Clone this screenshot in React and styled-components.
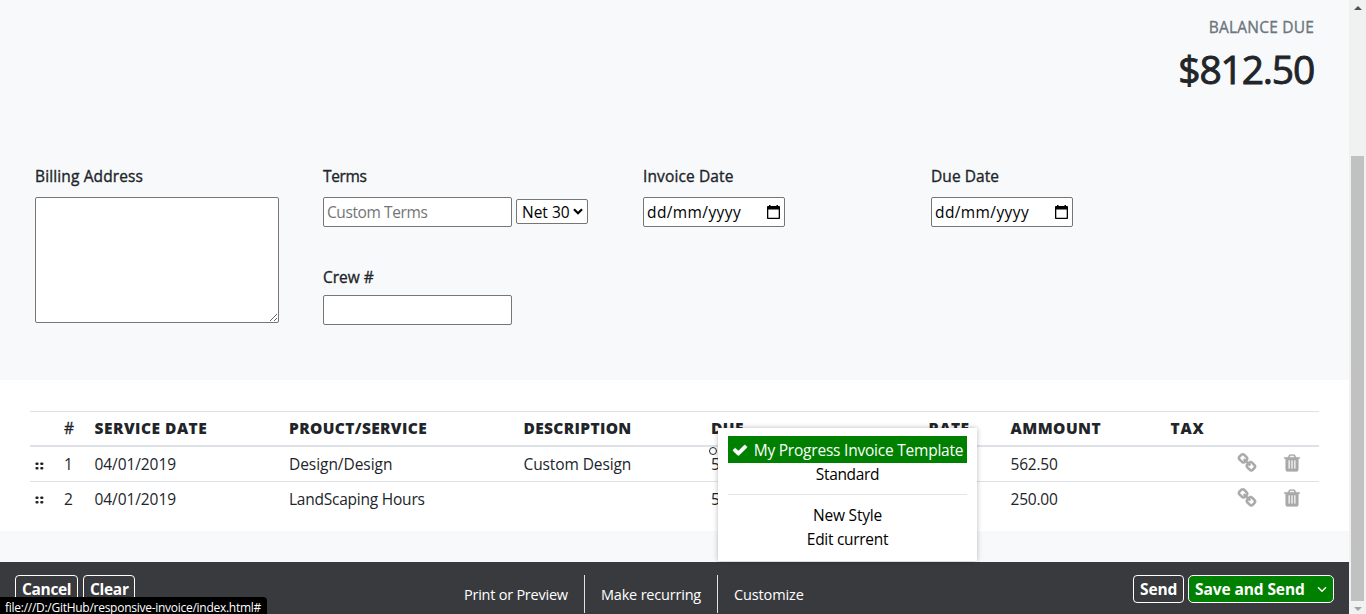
import React from "react";
import styled, { createGlobalStyle } from "styled-components";

const GlobalStyle = createGlobalStyle`
  * { box-sizing: border-box; }
  body {
    margin: 0;
    overflow: hidden;
    background: #f8f9fb;
    color: #212529;
    font: 400 15.5px/24px "Open Sans", "Noto Sans", sans-serif;
  }
`;

const Screen = styled.div`
  position: relative;
  display: flex;
  height: 614px;
  overflow: hidden;
`;

const Page = styled.main`
  flex: 1;
  display: flex;
  flex-direction: column;
  background: #f8f9fb;
`;

const Text = styled.span`
  white-space: nowrap;
  letter-spacing: ${(p) => p.$track || 0}px;
`;

const Balance = styled.header`
  height: 164px;
  padding: 15px 35px 0 0;
  display: flex;
  flex-direction: column;
  align-items: flex-end;
`;

const BalanceLabel = styled(Text)`
  color: #6c757d;
  -webkit-text-stroke: 0.35px #6c757d;
`;

const BalanceAmount = styled(Text)`
  font-size: 39px;
  line-height: 48px;
  -webkit-text-stroke: 0.9px #212529;
  margin: 6px 0 0 0;
`;

const Form = styled.form`
  height: 216px;
  padding-left: 35px;
  display: grid;
  grid-template-columns: 288px 320px 288px 1fr;
  align-items: start;
`;

const Field = styled.div`
  display: flex;
  flex-direction: column;
  align-items: flex-start;
  gap: ${(p) => p.$gap || 9}px;
`;

const FieldStack = styled.div`
  display: flex;
  flex-direction: column;
  gap: 38px;
`;

const Label = styled.label`
  -webkit-text-stroke: 0.35px #212529;
  white-space: nowrap;
  letter-spacing: ${(p) => p.$track || 0}px;
`;

const Controls = styled.div`
  display: flex;
  gap: 4px;
`;

const Input = styled.input`
  width: 189px;
  height: 30px;
  padding: 1px 3px;
  border: 1px solid #767676;
  border-radius: 2px;
  background: #fff;
  font: inherit;
  letter-spacing: -0.4px;
  &::placeholder { color: #757575; opacity: 1; }
`;

const Area = styled.textarea`
  display: block;
  width: 244px;
  height: 126px;
  border: 1px solid #767676;
  border-radius: 2px;
  background: #fff;
  resize: both;
`;

const Select = styled.div`
  width: 72px;
  height: 25px;
  margin-top: 2px;
  padding: 0 4px 0 5px;
  display: flex;
  align-items: center;
  justify-content: space-between;
  border: 1px solid #767676;
  border-radius: 2px;
  background: #fff;
  color: #000;
`;

const DateBox = styled.div`
  width: 142px;
  height: 30px;
  padding: 0 3px;
  display: flex;
  align-items: center;
  justify-content: space-between;
  border: 1px solid #767676;
  border-radius: 2px;
  background: #fff;
  color: #000;
`;

const Items = styled.section`
  height: 151px;
  padding: 31px 30px 0;
  background: #fff;
`;

const Row = styled.div`
  display: grid;
  grid-template-columns: 34px 30.5px 194.5px 234.5px 187.5px 217.5px 82px 160px 66.5px 44.5px 1fr;
  align-items: center;
  height: ${(p) => (p.$head ? 36 : p.$first ? 34 : 35)}px;
  padding-bottom: ${(p) => (p.$head ? 2 : p.$first ? 0 : 1)}px;
  border-top: ${(p) => (p.$first ? 0 : 1)}px solid #dee2e6;
  border-bottom: ${(p) => (p.$head ? 2 : 0)}px solid #dee2e6;
`;

const Heading = styled(Text)`
  font-size: 15.5px;
  font-weight: 800;
`;

const NumberHeading = styled(Text)`
  -webkit-text-stroke: 0.35px #212529;
`;

const Grip = styled.span`
  padding: 3px 0 0 5px;
  display: flex;
`;

const IconCell = styled.span`
  display: flex;
  padding-bottom: 2px;
  color: #a9a9a9;
`;

const Footer = styled.footer`
  height: 52px;
  margin-top: auto;
  padding: 13px 15px 0 15px;
  display: grid;
  grid-template-columns: 433px 1fr auto;
  align-items: start;
  background: #393a3d;
  color: #fff;
`;

const ButtonGroup = styled.div`
  display: flex;
  gap: ${(p) => p.$gap}px;
`;

const Button = styled.button`
  width: ${(p) => p.$width}px;
  height: 28px;
  padding: 0 6px;
  display: flex;
  align-items: center;
  justify-content: space-between;
  border: 1px solid #fff;
  border-radius: ${(p) => (p.$primary ? 5 : 4)}px;
  background: ${(p) => (p.$primary ? "#008000" : "transparent")};
  color: #fff;
  font: 700 15.5px/24px "Open Sans", "Noto Sans", sans-serif;
`;

const Links = styled.nav`
  display: flex;
`;

const FootLink = styled.a`
  width: ${(p) => p.$width}px;
  height: 38px;
  padding: 8px 0 0 16px;
  border-right: ${(p) => (p.$last ? 0 : 1)}px solid #dee2e6;
  font-size: 14.5px;
`;

const Bullet = styled.span`
  position: absolute;
  left: 709px;
  top: 447px;
  width: 8px;
  height: 8px;
  border: 1px solid #212529;
  border-radius: 50%;
`;

const Menu = styled.div`
  position: absolute;
  left: 718px;
  top: 428px;
  width: 259px;
  height: 133px;
  padding: 8px 10px 0;
  background: #fff;
  color: #000;
  box-shadow: 0 0 5px rgba(0, 0, 0, 0.28);
`;

const MenuItem = styled.div`
  height: ${(p) => (p.$active ? 27 : 24)}px;
  padding-bottom: ${(p) => (p.$active ? 0 : 2)}px;
  display: flex;
  align-items: center;
  justify-content: center;
  gap: 6px;
  background: ${(p) => (p.$active ? "#008000" : "transparent")};
  color: ${(p) => (p.$active ? "#fff" : "#000")};
`;

const Divider = styled.div`
  height: 1px;
  margin: 7px 0 9px;
  background: #e5e5e5;
`;

const StatusTip = styled.div`
  position: absolute;
  left: 0;
  bottom: 0;
  width: 267px;
  height: 17px;
  padding: 1px 0 0 5px;
  border-radius: 0 4px 0 0;
  background: #000;
  color: #fff;
  font-size: 12px;
  line-height: 19px;
`;

const Scrollbar = styled.aside`
  width: 17px;
  padding: 6px 0 3px;
  display: flex;
  flex-direction: column;
  align-items: center;
  background: #f1f1f1;
`;

const Thumb = styled.div`
  width: 13px;
  height: 445px;
  margin: 146px 0 6px;
  background: #c1c1c1;
`;

const Arrow = styled.div`
  width: 0;
  height: 0;
  border: 4px solid transparent;
  border-top-width: ${(p) => (p.$down ? 4 : 0)}px;
  border-bottom-width: ${(p) => (p.$down ? 0 : 4)}px;
  border-top-color: ${(p) => (p.$down ? "#a3a3a3" : "transparent")};
  border-bottom-color: ${(p) => (p.$down ? "transparent" : "#505050")};
`;

const LINK_PATH =
  "M1520 1216q0-40-28-68l-208-208q-28-28-68-28-42 0-72 32 3 3 19 18.5t21.5 21.5 15 19 13 25.5 3.5 27.5q0 40-28 68t-68 28q-15 0-27.5-3.5t-25.5-13-19-15-21.5-21.5-18.5-19q-33 31-33 73 0 40 28 68l206 207q27 27 68 27 40 0 68-26l147-146q28-28 28-67zm-703-705q0-40-28-68l-206-207q-28-28-68-28-39 0-68 27l-147 146q-28 28-28 67 0 40 28 68l208 208q27 27 68 27 42 0 72-31-3-3-19-18.5t-21.5-21.5-15-19-13-25.5-3.5-27.5q0-40 28-68t68-28q15 0 27.5 3.5t25.5 13 19 15 21.5 21.5 18.5 19q33-31 33-73zm895 705q0 120-85 203l-147 146q-83 83-203 83-121 0-204-85l-206-207q-83-83-83-203 0-123 88-209l-88-88q-86 88-208 88-120 0-204-84l-208-208q-84-84-84-204t85-203l147-146q83-83 203-83 121 0 204 85l206 207q83 83 83 203 0 123-88 209l88 88q86-88 208-88 120 0 204 84l208 208q84 84 84 204z";
const TRASH_PATH =
  "M704 1376v-704q0-14-9-23t-23-9h-64q-14 0-23 9t-9 23v704q0 14 9 23t23 9h64q14 0 23-9t9-23zm256 0v-704q0-14-9-23t-23-9h-64q-14 0-23 9t-9 23v704q0 14 9 23t23 9h64q14 0 23-9t9-23zm256 0v-704q0-14-9-23t-23-9h-64q-14 0-23 9t-9 23v704q0 14 9 23t23 9h64q14 0 23-9t9-23zm-544-992h448l-48-117q-7-9-17-11h-317q-10 2-17 11zm928 32v64q0 14-9 23t-23 9h-96v948q0 83-47 143.5t-113 60.5h-832q-66 0-113-58.5t-47-141.5v-952h-96q-14 0-23-9t-9-23v-64q0-14 9-23t23-9h309l70-167q15-37 54-63t79-26h320q40 0 79 26t54 63l70 167h309q14 0 23 9t9 23z";
const CHECK_PATH =
  "M1671 566q0 40-28 68l-724 724-136 136q-28 28-68 28t-68-28l-136-136-362-362q-28-28-28-68t28-68l136-136q28-28 68-28t68 28l294 295 656-657q28-28 68-28t68 28l136 136q28 28 28 68z";

const Glyph = ({ d, size, weight = 50 }) => (
  <svg
    width={size}
    height={size}
    viewBox="0 0 1792 1792"
    fill="currentColor"
    stroke="currentColor"
    strokeWidth={weight}
  >
    <path d={d} fillRule="evenodd" />
  </svg>
);

const GripIcon = () => (
  <svg width="9" height="8" viewBox="0 0 9 8" fill="#212529">
    <rect x="0.5" y="0.5" width="3" height="2.6" rx="0.8" />
    <rect x="5.3" y="0.5" width="3" height="2.6" rx="0.8" />
    <rect x="0.5" y="5" width="3" height="2.6" rx="0.8" />
    <rect x="5.3" y="5" width="3" height="2.6" rx="0.8" />
  </svg>
);

const CalendarIcon = () => (
  <svg width="14" height="15" viewBox="0 0 14 15">
    <path
      d="M2 0h1.5v1h6V0H11v1h1.2q.8 0 .8.8v11.400q0 .8-.8.8H.8q-.8 0-.8-.8V1.800Q0 1 .8 1H2zM1.300 4.500v8.200h10.400V4.500z"
      fill="#000"
      fillRule="evenodd"
    />
  </svg>
);

const Chevron = ({ width, stroke }) => (
  <svg width={width} height="7" viewBox="0 0 10 7" fill="none" stroke="currentColor" strokeWidth={stroke}>
    <path d="M1 1.200 5 5.200 9 1.200" />
  </svg>
);

const headings = [
  ["SERVICE DATE", 0.48],
  ["PROUCT/SERVICE", 0.35],
  ["DESCRIPTION", 0.34],
  ["DUE", 0.4],
  ["RATE", 0.4],
  ["AMMOUNT", 0.45],
  ["TAX", 0.8],
];

const rows = [
  { n: "1", date: "04/01/2019", service: "Design/Design", text: "Custom Design", due: "5", amount: "562.50" },
  { n: "2", date: "04/01/2019", service: "LandScaping Hours", text: "", due: "5", amount: "250.00", track: -0.23 },
];

const DateField = ({ label, track }) => (
  <Field>
    <Label $track={track}>{label}</Label>
    <DateBox>
      <Text $track={0.4}>dd/mm/yyyy</Text>
      <CalendarIcon />
    </DateBox>
  </Field>
);

export default function App() {
  return (
    <Screen>
      <GlobalStyle />
      <Page>
        <Balance>
          <BalanceLabel $track={0.2}>BALANCE DUE</BalanceLabel>
          <BalanceAmount $track={-1.2}>$812.50</BalanceAmount>
        </Balance>
        <Form>
          <Field>
            <Label $track={0.13}>Billing Address</Label>
            <Area />
          </Field>
          <FieldStack>
            <Field>
              <Label $track={-0.35}>Terms</Label>
              <Controls>
                <Input placeholder="Custom Terms" />
                <Select>
                  <Text>Net 30</Text>
                  <Chevron width={10} stroke={2.2} />
                </Select>
              </Controls>
            </Field>
            <Field $gap={6}>
              <Label>Crew #</Label>
              <Input />
            </Field>
          </FieldStack>
          <DateField label="Invoice Date" track={0.12} />
          <DateField label="Due Date" track={0.07} />
        </Form>
        <Items>
          <Row $head>
            <span />
            <NumberHeading>#</NumberHeading>
            {headings.map(([name, track]) => (
              <Heading key={name} $track={track}>{name}</Heading>
            ))}
          </Row>
          {rows.map((r, i) => (
            <Row key={r.n} $first={i === 0}>
              <Grip><GripIcon /></Grip>
              <Text>{r.n}</Text>
              <Text $track={-0.08}>{r.date}</Text>
              <Text $track={r.track || -0.05}>{r.service}</Text>
              <Text $track={-0.1}>{r.text}</Text>
              <Text>{r.due}</Text>
              <span />
              <Text $track={-0.2}>{r.amount}</Text>
              <span />
              <IconCell><Glyph d={LINK_PATH} size={20} /></IconCell>
              <IconCell><Glyph d={TRASH_PATH} size={20} weight={20} /></IconCell>
            </Row>
          ))}
        </Items>
        <Footer>
          <ButtonGroup $gap={5}>
            <Button $width={63}><Text $track={-0.35}>Cancel</Text></Button>
            <Button $width={52}><Text $track={-0.3}>Clear</Text></Button>
          </ButtonGroup>
          <Links>
            <FootLink $width={137}><Text $track={-0.24}>Print or Preview</Text></FootLink>
            <FootLink $width={133}><Text $track={-0.2}>Make recurring</Text></FootLink>
            <FootLink $width={110} $last><Text $track={-0.12}>Customize</Text></FootLink>
          </Links>
          <ButtonGroup $gap={4}>
            <Button $width={51}><Text $track={-0.1}>Send</Text></Button>
            <Button $width={146} $primary>
              <Text $track={-0.1}>Save and Send</Text>
              <Chevron width={10} stroke={1.4} />
            </Button>
          </ButtonGroup>
        </Footer>
      </Page>
      <Scrollbar>
        <Arrow />
        <Thumb />
        <Arrow $down />
      </Scrollbar>
      <Bullet />
      <Menu>
        <MenuItem $active>
          <Glyph d={CHECK_PATH} size={16} />
          <Text $track={-0.22}>My Progress Invoice Template</Text>
        </MenuItem>
        <MenuItem><Text $track={-0.35}>Standard</Text></MenuItem>
        <Divider />
        <MenuItem><Text $track={-0.2}>New Style</Text></MenuItem>
        <MenuItem><Text $track={-0.3}>Edit current</Text></MenuItem>
      </Menu>
      <StatusTip><Text $track={-0.27}>file:///D:/GitHub/responsive-invoice/index.html#</Text></StatusTip>
    </Screen>
  );
}
